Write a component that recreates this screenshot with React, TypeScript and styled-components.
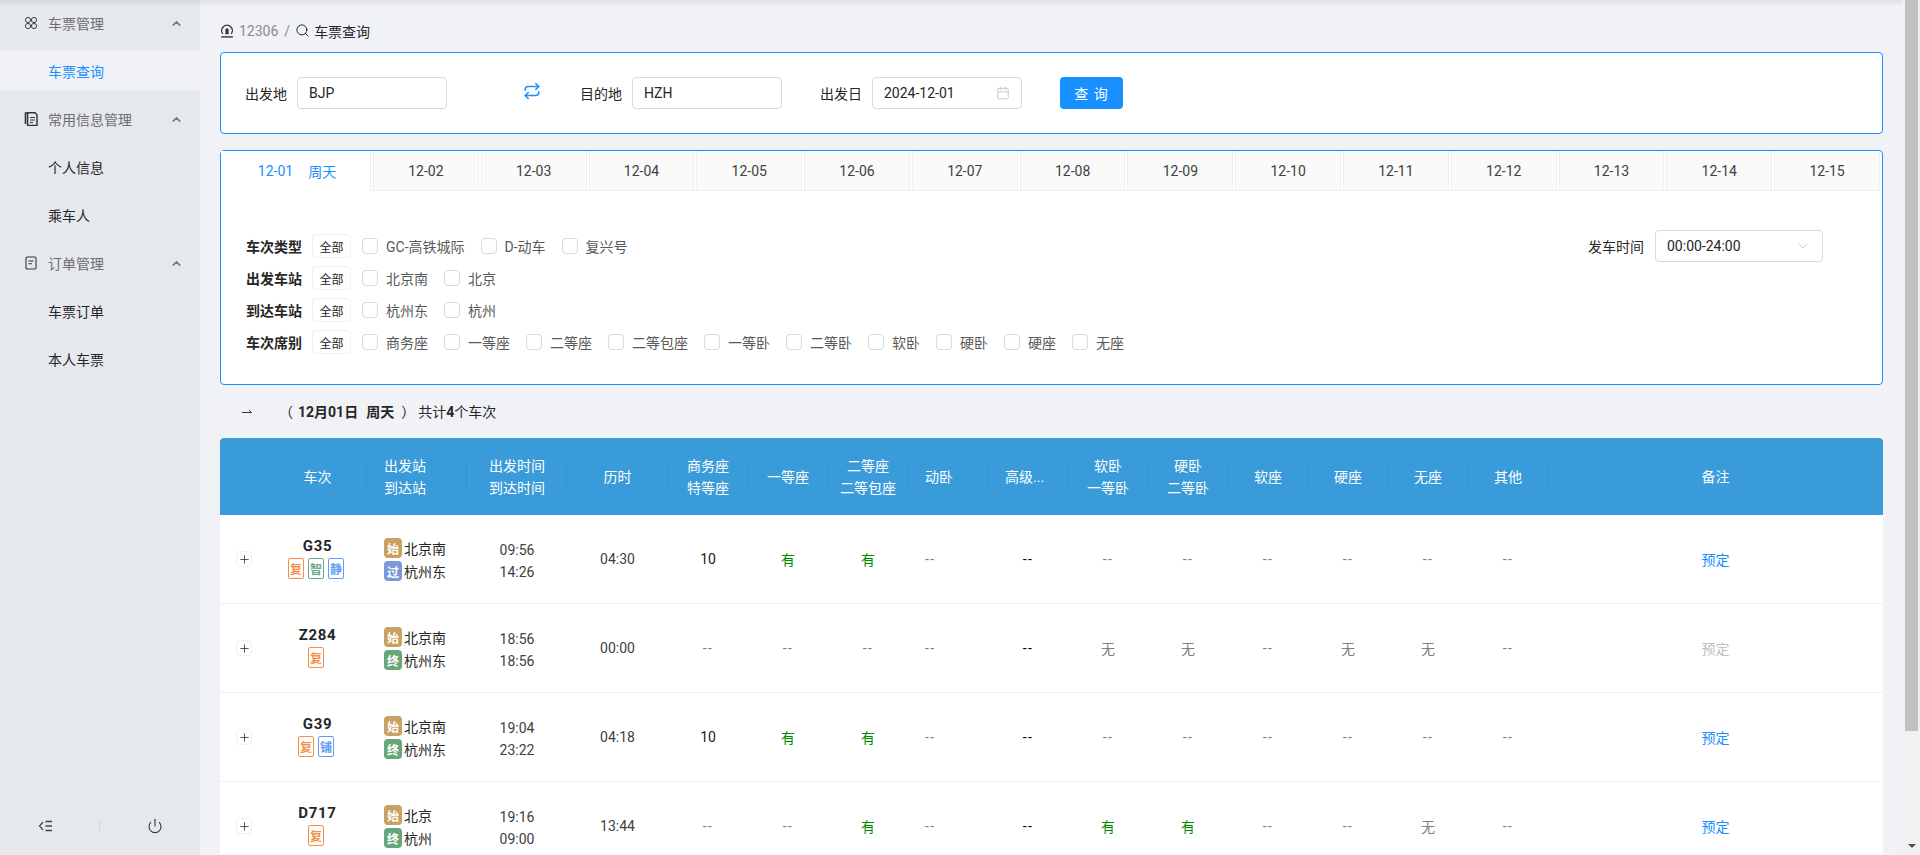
import React from "react";
import styled, { createGlobalStyle } from "styled-components";
import { Calendar, ChevronDown, ChevronUp, Plus, Power, Repeat, Search } from "lucide-react";

const GlobalStyle = createGlobalStyle`
  html, body, #root {
    margin: 0;
    height: 100%;
    overflow: hidden;
  }
  body {
    font-family: Roboto, "Noto Sans CJK SC", sans-serif;
    font-size: 14px;
    color: #262626;
    background: #f0f2f6;
  }
  * {
    box-sizing: border-box;
  }
`;

const Layout = styled.div`
  position: relative;
  display: flex;
  height: 855px;
`;

const TopShadow = styled.div`
  position: absolute;
  top: 0;
  left: 0;
  right: 17px;
  height: 6px;
  background: linear-gradient(to bottom, rgba(0, 0, 0, 0.07), rgba(0, 0, 0, 0));
  z-index: 5;
`;

const Sidebar = styled.aside`
  flex: 0 0 200px;
  display: flex;
  flex-direction: column;
  background: #e5e8ed;
  padding-top: 3px;
`;

const Menu = styled.nav`
  flex: 1;
  display: flex;
  flex-direction: column;
  gap: 8px;
`;

const MenuTitle = styled.div`
  display: flex;
  align-items: center;
  height: 40px;
  padding: 0 17px 0 24px;
  color: #6e6e6e;
`;

const MenuIcon = styled.svg`
  flex: 0 0 14px;
  width: 14px;
  height: 14px;
  margin-right: 10px;
`;

const MenuLabel = styled.span`
  flex: 1;
`;

const MenuItem = styled.div<{ $active?: boolean }>`
  display: flex;
  align-items: center;
  height: 40px;
  padding-left: 48px;
  color: ${({ $active }) => ($active ? "#1890ff" : "#262626")};
  background: ${({ $active }) => ($active ? "#f0f2f7" : "transparent")};
`;

const SideFooter = styled.div`
  display: flex;
  align-items: center;
  justify-content: space-between;
  height: 58px;
  padding: 0 37px 0 38px;
  color: #333;
`;

const SideDivider = styled.i`
  width: 1px;
  height: 12px;
  background: #d4d7dc;
`;

const Main = styled.main`
  flex: 1;
  min-width: 0;
  height: 855px;
  overflow: hidden;
`;

const ScrollRail = styled.div`
  flex: 0 0 17px;
  display: flex;
  flex-direction: column;
  align-items: center;
  height: 855px;
  background: #f1f1f1;
`;

const ScrollThumb = styled.div`
  width: 13px;
  height: 731px;
  background: #c1c1c1;
`;

const ScrollArrow = styled.div`
  margin-top: auto;
  margin-bottom: 7px;
  border-top: 4px solid #505050;
  border-left: 4px solid transparent;
  border-right: 4px solid transparent;
`;

const Content = styled.div`
  padding: 0 20px;
`;

const Breadcrumb = styled.div`
  display: flex;
  align-items: center;
  height: 52px;
  padding-top: 9px;
`;

const CrumbMuted = styled.span`
  margin-left: 5px;
  color: #8c8c8c;
`;

const CrumbSep = styled.span`
  margin: 0 5px 0 6px;
  color: #8c8c8c;
`;

const CrumbCurrent = styled.span`
  margin-left: 4px;
  color: #262626;
`;

const Card = styled.section`
  background: #fff;
  border: 1px solid #1890ff;
  border-radius: 4px;
`;

const SearchForm = styled(Card)`
  display: flex;
  align-items: center;
  height: 82px;
  padding-left: 24px;
`;

const FieldLabel = styled.span`
  width: 42px;
  margin-right: 10px;
  white-space: nowrap;
`;

const Field = styled.div`
  display: flex;
  align-items: center;
  justify-content: space-between;
  width: 150px;
  height: 32px;
  padding: 0 11px;
  background: #fff;
  border: 1px solid #d9d9d9;
  border-radius: 4px;
  color: #262626;
`;

const SwapButton = styled.span`
  display: flex;
  width: 18px;
  margin: 0 39px 4px 76px;
  color: #1890ff;
`;

const DateLabel = styled(FieldLabel)`
  margin-left: 38px;
`;

const QueryButton = styled.button`
  width: 63px;
  height: 32px;
  margin-left: 38px;
  padding: 0;
  border: none;
  border-radius: 4px;
  background: #1890ff;
  color: #fff;
  font: inherit;
  letter-spacing: 1px;
`;

const FilterCard = styled(Card)`
  height: 235px;
  margin-top: 16px;
`;

const DateTabs = styled.div`
  display: flex;
  gap: 2px;
  height: 40px;
  padding-right: 2px;
  border-bottom: 1px solid #f0f0f0;
`;

const DateTab = styled.div<{ $active?: boolean }>`
  flex: ${({ $active }) => ($active ? "0 0 150px" : "1")};
  display: flex;
  align-items: center;
  justify-content: center;
  gap: 15px;
  height: ${({ $active }) => ($active ? "40px" : "39px")};
  padding-left: ${({ $active }) => ($active ? "3px" : "0")};
  background: ${({ $active }) => ($active ? "#fff" : "#fafafa")};
  border-right: 1px solid #f0f0f0;
  border-left: ${({ $active }) => ($active ? "none" : "1px solid #f0f0f0")};
  color: ${({ $active }) => ($active ? "#1890ff" : "#404040")};
`;

const FilterBody = styled.div`
  display: flex;
  justify-content: space-between;
  padding: 39px 59px 0 25px;
`;

const FilterRows = styled.div`
  display: flex;
  flex-direction: column;
`;

const FilterRow = styled.div`
  display: flex;
  align-items: center;
  height: 32px;
`;

const FilterName = styled.span`
  width: 56px;
  margin-right: 10px;
  font-weight: 700;
  white-space: nowrap;
`;

const AllChip = styled.span`
  display: flex;
  align-items: center;
  justify-content: center;
  width: 39px;
  height: 24px;
  margin-right: 11px;
  border: 1px solid #f0f0f0;
  border-radius: 4px;
  font-size: 12px;
`;

const Check = styled.label`
  display: flex;
  align-items: center;
  margin-right: 8px;
  color: #595959;
  white-space: nowrap;
`;

const CheckBox = styled.span`
  width: 16px;
  height: 16px;
  margin-right: 8px;
  border: 1px solid #d9d9d9;
  border-radius: 4px;
  background: #fff;
`;

const CheckText = styled.span`
  padding-right: 8px;
`;

const TimeFilter = styled.div`
  display: flex;
  align-items: center;
  height: 32px;
  gap: 11px;
`;

const TimeSelect = styled(Field)`
  width: 168px;
`;

const Summary = styled.div`
  display: flex;
  align-items: center;
  height: 53px;
  padding: 0 0 2px 22px;
  white-space: pre;
`;

const SummaryParen = styled.span<{ $first?: boolean }>`
  margin-left: ${({ $first }) => ($first ? "27px" : "7px")};
`;

const SummaryDate = styled.b`
  margin-left: 5px;
  word-spacing: -0.8px;
`;

const SummaryTotal = styled.span`
  margin-left: 3px;
`;

const Table = styled.div`
  background: #fff;
`;

const columns = "48px 99px 100px 100px 101px repeat(11, 80px) 1fr";

const TableHead = styled.div`
  display: grid;
  grid-template-columns: ${columns};
  height: 77px;
  background: #399bd9;
  border-radius: 4px 4px 0 0;
  color: #fff;
`;

const HeadCell = styled.div<{ $left?: boolean }>`
  position: relative;
  display: flex;
  flex-direction: column;
  justify-content: center;
  align-items: ${({ $left }) => ($left ? "flex-start" : "center")};
  padding-left: ${({ $left }) => ($left ? "17px" : "0")};
  line-height: 22px;
  min-width: 0;
  white-space: nowrap;

  &:not(:first-child):not(:last-child)::after {
    content: "";
    position: absolute;
    top: 27px;
    right: 0;
    width: 1px;
    height: 22px;
    background: rgba(0, 0, 0, 0.07);
  }
`;

const TrainRow = styled.div`
  display: grid;
  grid-template-columns: ${columns};
  height: 89px;
  border-bottom: 1px solid #f0f0f0;
`;

const Cell = styled.div<{ $left?: boolean; $tone?: string; $dash?: boolean }>`
  display: flex;
  align-items: center;
  justify-content: ${({ $left }) => ($left ? "flex-start" : "center")};
  padding-left: ${({ $left }) => ($left ? "17px" : "0")};
  color: ${({ $tone }) => $tone || "#404040"};
  letter-spacing: ${({ $dash }) => ($dash ? "1.5px" : "0")};
`;

const ExpandButton = styled.span`
  display: flex;
  align-items: center;
  justify-content: center;
  width: 16px;
  height: 16px;
  border: 1px solid #f0f0f0;
  border-radius: 4px;
  color: #262626;
`;

const TrainCell = styled.div`
  display: flex;
  flex-direction: column;
  align-items: center;
  padding-top: 21px;
`;

const TrainNo = styled.div`
  height: 20px;
  margin-bottom: 2px;
  font-size: 15px;
  font-weight: 700;
  line-height: 20px;
  letter-spacing: 0.7px;
`;

const TrainTags = styled.div`
  display: flex;
  gap: 4px;
  margin-right: 3px;
`;

const TrainTag = styled.span<{ $color: string }>`
  display: flex;
  align-items: center;
  justify-content: center;
  width: 16px;
  height: 21px;
  border: 1px solid ${({ $color }) => $color};
  border-radius: 2px;
  color: ${({ $color }) => $color};
  font-size: 12px;
  font-weight: 700;
`;

const StationCell = styled.div`
  display: flex;
  flex-direction: column;
  justify-content: center;
  gap: 3px;
  padding: 1px 0 0 17px;
`;

const StationLine = styled.div`
  display: flex;
  align-items: center;
  height: 20px;
  gap: 2px;
`;

const StationTag = styled.span<{ $color: string }>`
  display: flex;
  align-items: center;
  justify-content: center;
  width: 18px;
  height: 20px;
  border-radius: 4px;
  background: ${({ $color }) => $color};
  color: #fff;
  font-size: 12px;
  font-weight: 700;
`;

const TimeCell = styled.div`
  display: flex;
  flex-direction: column;
  align-items: center;
  justify-content: center;
  line-height: 22px;
  padding-top: 3px;
  color: #404040;
`;

const Book = styled.span<{ $disabled?: boolean }>`
  color: ${({ $disabled }) => ($disabled ? "#bfbfbf" : "#1890ff")};
`;

const HalfArrow = styled.svg`
  width: 10px;
  height: 6px;
`;

const dates = ["12-02", "12-03", "12-04", "12-05", "12-06", "12-07", "12-08", "12-09", "12-10", "12-11", "12-12", "12-13", "12-14", "12-15"];

const filters = [
  { name: "出发车站", options: ["北京南", "北京"] },
  { name: "到达车站", options: ["杭州东", "杭州"] },
  { name: "车次席别", options: ["商务座", "一等座", "二等座", "二等包座", "一等卧", "二等卧", "软卧", "硬卧", "硬座", "无座"] },
];

const heads: { lines: string[]; left?: boolean }[] = [
  { lines: ["车次"] },
  { lines: ["出发站", "到达站"], left: true },
  { lines: ["出发时间", "到达时间"] },
  { lines: ["历时"] },
  { lines: ["商务座", "特等座"] },
  { lines: ["一等座"] },
  { lines: ["二等座", "二等包座"] },
  { lines: ["动卧"], left: true },
  { lines: ["高级..."], left: true },
  { lines: ["软卧", "一等卧"] },
  { lines: ["硬卧", "二等卧"] },
  { lines: ["软座"] },
  { lines: ["硬座"] },
  { lines: ["无座"] },
  { lines: ["其他"] },
  { lines: ["备注"] },
];

const ORANGE = "#f58f4b";
const GREEN = "#6aa983";
const BLUE = "#5d9cf8";
const START = "#c9a162";
const PASS = "#7b98d8";
const END = "#67a678";

const trains = [
  {
    no: "G35",
    tags: [["复", ORANGE], ["智", GREEN], ["静", BLUE]],
    from: "北京南",
    to: "杭州东",
    toTag: ["过", PASS],
    dep: "09:56",
    arr: "14:26",
    dur: "04:30",
    seats: ["10", "有", "有", "--", "--", "--", "--", "--", "--", "--", "--"],
  },
  {
    no: "Z284",
    tags: [["复", ORANGE]],
    from: "北京南",
    to: "杭州东",
    toTag: ["终", END],
    dep: "18:56",
    arr: "18:56",
    dur: "00:00",
    seats: ["--", "--", "--", "--", "--", "无", "无", "--", "无", "无", "--"],
    disabled: true,
  },
  {
    no: "G39",
    tags: [["复", ORANGE], ["铺", BLUE]],
    from: "北京南",
    to: "杭州东",
    toTag: ["终", END],
    dep: "19:04",
    arr: "23:22",
    dur: "04:18",
    seats: ["10", "有", "有", "--", "--", "--", "--", "--", "--", "--", "--"],
  },
  {
    no: "D717",
    tags: [["复", ORANGE]],
    from: "北京",
    to: "杭州",
    toTag: ["终", END],
    dep: "19:16",
    arr: "09:00",
    dur: "13:44",
    seats: ["--", "--", "有", "--", "--", "有", "有", "--", "--", "无", "--"],
  },
];

const seatTone = (value: string, index: number) => {
  if (index === 4) return "#000";
  if (value === "有") return "#008a00";
  if (value === "10") return "#1a1a1a";
  return "#808080";
};

const GridIcon = () => (
  <MenuIcon viewBox="0 0 14 14" fill="none" stroke="#444" strokeWidth="1">
    <circle cx="4" cy="4" r="2.6" />
    <circle cx="10" cy="4" r="2.6" />
    <circle cx="4" cy="10" r="2.6" />
    <circle cx="10" cy="10" r="2.6" />
  </MenuIcon>
);

const DocsIcon = () => (
  <MenuIcon viewBox="0 0 14 14" fill="none" stroke="#333">
    <path d="M1.5 12V1h8" strokeWidth="1.6" />
    <path d="M3.6 0.8h7.4l2 2v10.6H3.6z" fill="#e5e8ed" strokeWidth="1.4" />
    <path d="M6 5.5h5M6 8h5M6 10.5h3" strokeWidth="1.1" />
  </MenuIcon>
);

const OrderIcon = () => (
  <MenuIcon viewBox="0 0 14 14" fill="none" stroke="#333" strokeWidth="1.1">
    <rect x="2" y="1" width="10" height="12" rx="1.2" />
    <path d="M4.5 5h5M4.5 7.8h3.5" />
  </MenuIcon>
);

const RailIcon = () => (
  <svg width="14" height="15" viewBox="0 0 13 14" fill="none" stroke="#333" strokeWidth="1.3">
    <path d="M2.6 10.2A5 5 0 1 1 10.4 10.2" />
    <path d="M1 13h11" />
    <path d="M5 10.5V6.5a1.5 1.5 0 0 1 3 0v4z" fill="#333" stroke="none" />
  </svg>
);

const CollapseIcon = () => (
  <svg width="14" height="12" viewBox="0 0 14 12" fill="none" stroke="#444">
    <path d="M5 2 1.5 6 5 10" strokeWidth="1.2" />
    <path d="M7.5 1.5H14M7.5 6H14M7.5 10.5H14" strokeWidth="1.5" />
  </svg>
);

const FilterOption = ({ label }: { label: string }) => (
  <Check>
    <CheckBox />
    <CheckText>{label}</CheckText>
  </Check>
);

export default function App() {
  return (
    <>
      <GlobalStyle />
      <Layout>
        <TopShadow />
        <Sidebar>
          <Menu>
            <MenuTitle>
              <GridIcon />
              <MenuLabel>车票管理</MenuLabel>
              <ChevronUp size={13} strokeWidth={3} color="#777" />
            </MenuTitle>
            <MenuItem $active>车票查询</MenuItem>
            <MenuTitle>
              <DocsIcon />
              <MenuLabel>常用信息管理</MenuLabel>
              <ChevronUp size={13} strokeWidth={3} color="#777" />
            </MenuTitle>
            <MenuItem>个人信息</MenuItem>
            <MenuItem>乘车人</MenuItem>
            <MenuTitle>
              <OrderIcon />
              <MenuLabel>订单管理</MenuLabel>
              <ChevronUp size={13} strokeWidth={3} color="#777" />
            </MenuTitle>
            <MenuItem>车票订单</MenuItem>
            <MenuItem>本人车票</MenuItem>
          </Menu>
          <SideFooter>
            <CollapseIcon />
            <SideDivider />
            <Power size={16} strokeWidth={1.6} />
          </SideFooter>
        </Sidebar>
        <Main>
          <Content>
            <Breadcrumb>
              <RailIcon />
              <CrumbMuted>12306</CrumbMuted>
              <CrumbSep>/</CrumbSep>
              <Search size={15} strokeWidth={1.6} />
              <CrumbCurrent>车票查询</CrumbCurrent>
            </Breadcrumb>

            <SearchForm>
              <FieldLabel>出发地</FieldLabel>
              <Field>BJP</Field>
              <SwapButton>
                <Repeat size={18} />
              </SwapButton>
              <FieldLabel>目的地</FieldLabel>
              <Field>HZH</Field>
              <DateLabel>出发日</DateLabel>
              <Field>
                2024-12-01
                <Calendar size={14} strokeWidth={1.4} color="#bfbfbf" />
              </Field>
              <QueryButton>查 询</QueryButton>
            </SearchForm>

            <FilterCard>
              <DateTabs>
                <DateTab $active>
                  <span>12-01</span>
                  <span>周天</span>
                </DateTab>
                {dates.map((d) => (
                  <DateTab key={d}>{d}</DateTab>
                ))}
              </DateTabs>
              <FilterBody>
                <FilterRows>
                  <FilterRow>
                    <FilterName>车次类型</FilterName>
                    <AllChip>全部</AllChip>
                    <FilterOption label="GC-高铁城际" />
                    <FilterOption label="D-动车" />
                    <FilterOption label="复兴号" />
                  </FilterRow>
                  {filters.map((f) => (
                    <FilterRow key={f.name}>
                      <FilterName>{f.name}</FilterName>
                      <AllChip>全部</AllChip>
                      {f.options.map((o) => (
                        <FilterOption key={o} label={o} />
                      ))}
                    </FilterRow>
                  ))}
                </FilterRows>
                <TimeFilter>
                  <span>发车时间</span>
                  <TimeSelect>
                    00:00-24:00
                    <ChevronDown size={16} strokeWidth={1.2} color="#bfbfbf" />
                  </TimeSelect>
                </TimeFilter>
              </FilterBody>
            </FilterCard>

            <Summary>
              <HalfArrow viewBox="0 0 10 6" fill="none" stroke="#333" strokeWidth="1">
                <path d="M0 4.5h9.5L7 2" />
              </HalfArrow>
              <SummaryParen $first>（</SummaryParen>
              <SummaryDate>12月01日   周天</SummaryDate>
              <SummaryParen>）</SummaryParen>
              <SummaryTotal>
                共计<b>4</b>个车次
              </SummaryTotal>
            </Summary>

            <Table>
              <TableHead>
                <HeadCell />
                {heads.map((h) => (
                  <HeadCell key={h.lines[0]} $left={h.left}>
                    {h.lines.map((l) => (
                      <span key={l}>{l}</span>
                    ))}
                  </HeadCell>
                ))}
              </TableHead>
              {trains.map((t) => (
                <TrainRow key={t.no}>
                  <Cell>
                    <ExpandButton>
                      <Plus size={13} strokeWidth={1.4} />
                    </ExpandButton>
                  </Cell>
                  <TrainCell>
                    <TrainNo>{t.no}</TrainNo>
                    <TrainTags>
                      {t.tags.map(([label, color]) => (
                        <TrainTag key={label} $color={color}>
                          {label}
                        </TrainTag>
                      ))}
                    </TrainTags>
                  </TrainCell>
                  <StationCell>
                    <StationLine>
                      <StationTag $color={START}>始</StationTag>
                      {t.from}
                    </StationLine>
                    <StationLine>
                      <StationTag $color={t.toTag[1]}>{t.toTag[0]}</StationTag>
                      {t.to}
                    </StationLine>
                  </StationCell>
                  <TimeCell>
                    <span>{t.dep}</span>
                    <span>{t.arr}</span>
                  </TimeCell>
                  <Cell>{t.dur}</Cell>
                  {t.seats.map((s, i) => (
                    <Cell key={i} $left={i === 3} $tone={seatTone(s, i)} $dash={s === "--"}>
                      {s}
                    </Cell>
                  ))}
                  <Cell>
                    <Book $disabled={t.disabled}>预定</Book>
                  </Cell>
                </TrainRow>
              ))}
            </Table>
          </Content>
        </Main>
        <ScrollRail>
          <ScrollThumb />
          <ScrollArrow />
        </ScrollRail>
      </Layout>
    </>
  );
}
